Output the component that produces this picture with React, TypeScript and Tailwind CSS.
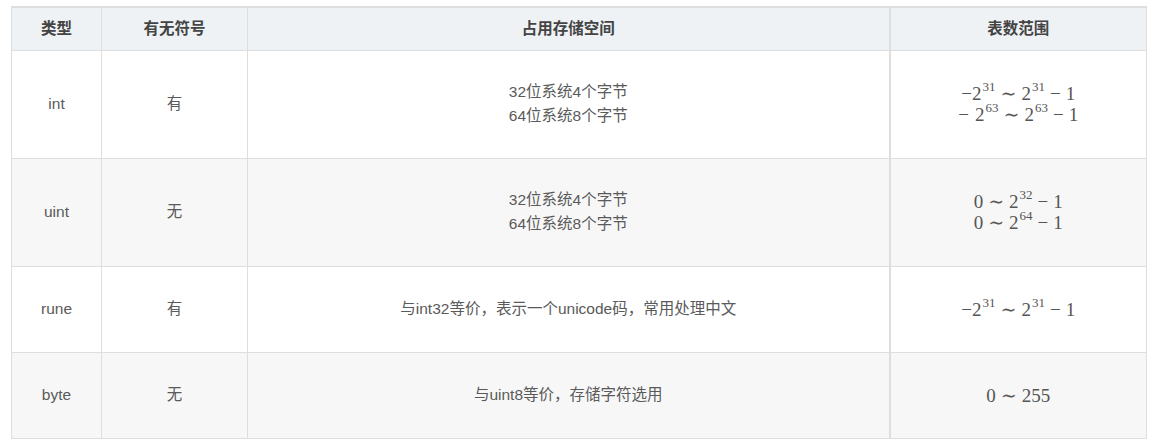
const rows = [
  {
    type: 'int',
    signed: '有',
    size: ['32位系统4个字节', '64位系统8个字节'],
    range: [
      [['−', ''], ['2', '31'], ['∼', ''], ['2', '31'], ['−', ''], ['1', '']],
      [['− ', ''], ['2', '63'], ['∼', ''], ['2', '63'], ['−', ''], ['1', '']],
    ],
    h: 'h-[108px]',
  },
  {
    type: 'uint',
    signed: '无',
    size: ['32位系统4个字节', '64位系统8个字节'],
    range: [
      [['0', ''], ['∼', ''], ['2', '32'], ['−', ''], ['1', '']],
      [['0', ''], ['∼', ''], ['2', '64'], ['−', ''], ['1', '']],
    ],
    h: 'h-[108px]',
  },
  {
    type: 'rune',
    signed: '有',
    size: ['与int32等价，表示一个unicode码，常用处理中文'],
    range: [[['−', ''], ['2', '31'], ['∼', ''], ['2', '31'], ['−', ''], ['1', '']]],
    h: 'h-[86px]',
  },
  {
    type: 'byte',
    signed: '无',
    size: ['与uint8等价，存储字符选用'],
    range: [[['0', ''], ['∼', ''], ['255', '']]],
    h: 'h-[86px]',
  },
];

function MathLine({ parts }: { parts: string[][] }) {
  return (
    <div className="leading-[21px] whitespace-nowrap">
      {parts.map(([base, sup], i) => {
        const isOp = base.trim() === '∼' || (base.trim() === '−' && i > 0);
        const lead = base === '− ';
        return (
          <span key={i} className={isOp ? 'mx-[5px]' : lead ? 'mr-[6px]' : ''}>
            {base.trim()}
            {sup && <sup className="text-[13px] top-[-9px] ml-[1px]">{sup}</sup>}
          </span>
        );
      })}
    </div>
  );
}

export default function App() {
  return (
    <div className="bg-white w-[1156px] h-[447px] pt-[6px] pl-[11px]" style={{ fontFamily: '"Liberation Sans", "Noto Sans CJK SC", sans-serif' }}>
      <table className="border-collapse table-fixed w-[1135px] text-[15.5px] text-[#5a5a5a]">
        <colgroup>
          <col className="w-[90px]" />
          <col className="w-[146px]" />
          <col className="w-[642px]" />
          <col className="w-[257px]" />
        </colgroup>
        <thead>
          <tr className="bg-[#eef2f5] h-[43px]">
            <th className="border border-[#dedede] border-t-2 font-bold text-[#444]">类型</th>
            <th className="border border-[#dedede] border-t-2 font-bold text-[#444]">有无符号</th>
            <th className="border border-[#dedede] border-t-2 font-bold text-[#444]">占用存储空间</th>
            <th className="border border-[#dedede] border-t-2 border-l-2 font-bold text-[#444]">表数范围</th>
          </tr>
        </thead>
        <tbody>
          {rows.map((r, i) => (
            <tr key={r.type} className={`${r.h} ${i % 2 === 1 ? 'bg-[#f7f7f7]' : 'bg-white'}`}>
              <td className="border border-[#dedede] text-center">{r.type}</td>
              <td className="border border-[#dedede] text-center">{r.signed}</td>
              <td className="border border-[#dedede] text-center leading-[24px]">
                {r.size.map((s) => (
                  <div key={s}>{s}</div>
                ))}
              </td>
              <td className="border border-[#dedede] border-l-2 text-center text-[19px] text-[#555]" style={{ fontFamily: '"Liberation Serif", "DejaVu Serif", serif' }}>
                {r.range.map((p, j) => (
                  <MathLine key={j} parts={p} />
                ))}
              </td>
            </tr>
          ))}
        </tbody>
      </table>
    </div>
  );
}
